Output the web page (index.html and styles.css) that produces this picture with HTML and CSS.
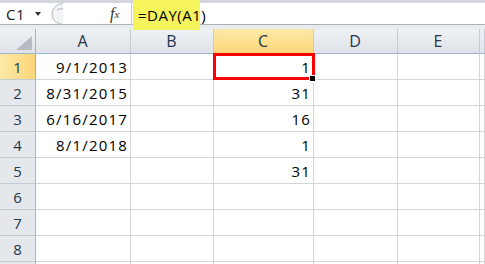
FILE: index.html
```html
<!DOCTYPE html>
<html lang="en">
<head>
  <meta charset="UTF-8">
  <title>DAY function</title>
  <link rel="stylesheet" href="styles.css">
</head>
<body>
  <!-- formula bar -->
  <div class="formula-bar">
    <div class="name-box">
      <span class="cell-ref">C1</span>
      <span class="caret"></span>
    </div>
    <div class="grip">
      <svg width="18" height="22" viewBox="0 0 18 22">
        <path d="M17 0.5 A11 10.5 0 0 0 17 21.5" fill="#f3f4f5" stroke="#b4b8bd" stroke-width="1"/>
        <path d="M11 7 q3 -2 6 -1" fill="none" stroke="#cfd2d6" stroke-width="2"/>
      </svg>
    </div>
    <div class="fx"><i>f</i><sub>x</sub></div>
    <div class="formula">
      <span class="highlight">=DAY(A1)</span>
    </div>
  </div>

  <!-- sheet -->
  <div class="sheet">
    <div class="corner"><span class="corner-tri"></span></div>
    <div class="col-head">A</div>
    <div class="col-head">B</div>
    <div class="col-head active">C</div>
    <div class="col-head">D</div>
    <div class="col-head">E</div>
    <div class="col-head"></div>

    <div class="row-head active">1</div>
    <div class="cell num">9/1/2013</div>
    <div class="cell"></div>
    <div class="cell num selected">1</div>
    <div class="cell"></div>
    <div class="cell"></div>
    <div class="cell"></div>

    <div class="row-head">2</div>
    <div class="cell num">8/31/2015</div>
    <div class="cell"></div>
    <div class="cell num">31</div>
    <div class="cell"></div>
    <div class="cell"></div>
    <div class="cell"></div>

    <div class="row-head">3</div>
    <div class="cell num">6/16/2017</div>
    <div class="cell"></div>
    <div class="cell num">16</div>
    <div class="cell"></div>
    <div class="cell"></div>
    <div class="cell"></div>

    <div class="row-head">4</div>
    <div class="cell num">8/1/2018</div>
    <div class="cell"></div>
    <div class="cell num">1</div>
    <div class="cell"></div>
    <div class="cell"></div>
    <div class="cell"></div>

    <div class="row-head">5</div>
    <div class="cell"></div>
    <div class="cell"></div>
    <div class="cell num">31</div>
    <div class="cell"></div>
    <div class="cell"></div>
    <div class="cell"></div>

    <div class="row-head">6</div>
    <div class="cell"></div>
    <div class="cell"></div>
    <div class="cell"></div>
    <div class="cell"></div>
    <div class="cell"></div>
    <div class="cell"></div>

    <div class="row-head">7</div>
    <div class="cell"></div>
    <div class="cell"></div>
    <div class="cell"></div>
    <div class="cell"></div>
    <div class="cell"></div>
    <div class="cell"></div>

    <div class="row-head">8</div>
    <div class="cell"></div>
    <div class="cell"></div>
    <div class="cell"></div>
    <div class="cell"></div>
    <div class="cell"></div>
    <div class="cell"></div>

    <div class="row-head last"></div>
    <div class="cell last"></div>
    <div class="cell last"></div>
    <div class="cell last"></div>
    <div class="cell last"></div>
    <div class="cell last"></div>
    <div class="cell last"></div>
  </div>
</body>
</html>
```

FILE: styles.css
```css
body {
  margin: 0;
  width: 485px;
  height: 264px;
  overflow: hidden;
  background: #fff;
  font-family: "Open Sans", "Liberation Sans", sans-serif;
  color: #000;
}

/* formula bar */
.formula-bar {
  position: relative;
  display: flex;
  height: 22px;
  background: #fff;
  border-top: 3px solid #d3d6da;
  border-bottom: 4px solid #e9ecef;
  box-shadow: inset 0 -1px 0 #a9b0b8;
}
.name-box {
  width: 46px;
  display: flex;
  align-items: center;
  padding-left: 6px;
  box-sizing: border-box;
  font-size: 15px;
  color: #1a1a1a;
}
.cell-ref {
  letter-spacing: 0.6px;
}
.caret {
  margin-left: 10px;
  width: 0;
  height: 0;
  border-left: 3px solid transparent;
  border-right: 3px solid transparent;
  border-top: 4px solid #333;
}
.grip {
  width: 64px;
  display: flex;
  align-items: center;
}
.fx {
  width: 21px;
  display: flex;
  align-items: center;
  font-family: "Liberation Serif", serif;
  font-size: 16px;
  color: #333;
}
.fx sub {
  font-size: 11px;
  font-style: italic;
  vertical-align: -2px;
}
.formula {
  flex: 1;
  border-left: 1px solid #c9ccd0;
  display: flex;
  align-items: center;
}
.highlight {
  position: absolute;
  left: 133px;
  top: -3px;
  width: 67px;
  height: 30px;
  background: #f6f45c;
  font-size: 15px;
  letter-spacing: 0.5px;
  padding-left: 5px;
  box-sizing: border-box;
  line-height: 30px;
}

/* sheet grid */
.sheet {
  display: grid;
  grid-template-columns: 36px 95px 83px 100px 84px 82px 5px;
  grid-template-rows: 25px repeat(8, 26px) 2px;
}
.corner,
.col-head,
.row-head {
  background: linear-gradient(#eef1f4, #dfe3e8);
  color: #26364b;
  font-size: 16px;
  display: flex;
  align-items: center;
  justify-content: center;
  box-sizing: border-box;
}
.corner {
  border-right: 1px solid #9eb6ce;
  border-bottom: 1px solid #9eb6ce;
  align-items: flex-end;
  justify-content: flex-end;
  padding: 0 3px 3px 0;
}
.corner-tri {
  width: 0;
  height: 0;
  border-left: 16px solid transparent;
  border-bottom: 14px solid #b7bcc3;
}
.col-head {
  border-right: 1px solid #c5cbd3;
  border-bottom: 1px solid #9eb6ce;
  letter-spacing: 1px;
}
.row-head {
  border-right: 1px solid #9eb6ce;
  border-bottom: 1px solid #c5cbd3;
  background: #e4e8ed;
  font-size: 15px;
}
.col-head.active {
  background: linear-gradient(#fde9a6, #fbd87a);
  border-bottom-color: #e2a33f;
}
.row-head.active {
  background: linear-gradient(90deg, #fde9a6, #fbd67a);
  border-right-color: #e2a33f;
}

.cell {
  border-right: 1px solid #d4d4d4;
  border-bottom: 1px solid #d4d4d4;
  box-sizing: border-box;
  font-size: 15px;
  display: flex;
  align-items: center;
  justify-content: flex-end;
  padding-right: 2px;
}
.last {
  border-bottom: none;
}
.num {
  letter-spacing: 1.2px;
}
.selected {
  position: relative;
}
.selected::before {
  content: "";
  position: absolute;
  left: -1px;
  top: -1px;
  right: -2px;
  bottom: -1px;
  border: 3px solid #ff0000;
}
.selected::after {
  content: "";
  position: absolute;
  right: -3px;
  bottom: -3px;
  width: 5px;
  height: 5px;
  background: #000;
  border: 1px solid #fff;
}
```
